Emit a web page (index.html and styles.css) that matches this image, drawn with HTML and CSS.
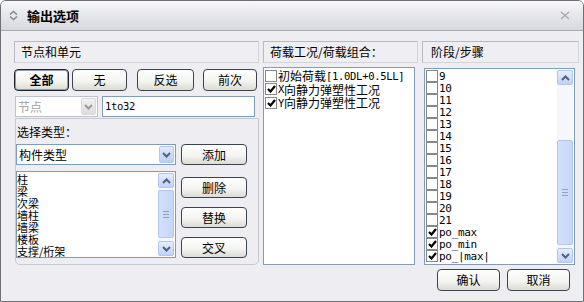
FILE: index.html
```html
<!DOCTYPE html>
<html>
<head>
    <meta charset="utf-8">
    <title>输出选项</title>
    <link rel="stylesheet" href="styles.css">
</head>
<body>
<div class="window">
    <div class="titlebar">
        <svg class="roll" width="9" height="11" viewBox="0 0 9 11"><path d="M1 4.5 L4.5 1.5 L8 4.5 M1 6.5 L4.5 9.5 L8 6.5" fill="none" stroke="#85878f" stroke-width="1.5"/></svg>
        <span class="title">输出选项</span>
        <svg class="close" width="10" height="9" viewBox="0 0 10 9"><path d="M1 1 L9 8 M9 1 L1 8" stroke="#a4a6ae" stroke-width="1.3"/></svg>
    </div>

    <div class="content">
        <div class="col left">
            <div class="head">节点和单元</div>
            <div class="btnrow">
                <div class="btn main b-all">全部</div>
                <div class="btn b-none">无</div>
                <div class="btn b-inv">反选</div>
                <div class="btn b-prev">前次</div>
            </div>
            <div class="pickrow">
                <div class="combo off node">
                    <span class="val">节点</span>
                    <span class="drop"><svg width="9" height="6" viewBox="0 0 9 6"><path d="M1 1 L4.5 4.5 L8 1" fill="none" stroke="#9a9a9a" stroke-width="2"/></svg></span>
                </div>
                <div class="field mono">1to32</div>
            </div>
            <div class="typebox">
                <div class="label">选择类型：</div>
                <div class="typegrid">
                    <div class="combo">
                        <span class="val">构件类型</span>
                        <span class="drop"><svg width="9" height="6" viewBox="0 0 9 6"><path d="M1 1 L4.5 4.5 L8 1" fill="none" stroke="#4d6185" stroke-width="2"/></svg></span>
                    </div>
                    <div class="btn slim">添加</div>
                    <div class="list types">
                        <div class="items">
                            <div>柱</div>
                            <div>梁</div>
                            <div>次梁</div>
                            <div>墙柱</div>
                            <div>墙梁</div>
                            <div>楼板</div>
                            <div>支撑/桁架</div>
                        </div>
                        <div class="sb">
                            <span class="arrow"><svg width="9" height="6" viewBox="0 0 9 6"><path d="M1 5 L4.5 1.5 L8 5" fill="none" stroke="#4d6185" stroke-width="2"/></svg></span>
                            <span class="thumb t-types"><i></i><i></i><i></i></span>
                            <span class="arrow"><svg width="9" height="6" viewBox="0 0 9 6"><path d="M1 1 L4.5 4.5 L8 1" fill="none" stroke="#4d6185" stroke-width="2"/></svg></span>
                        </div>
                    </div>
                    <div class="btncol">
                        <div class="btn slim">删除</div>
                        <div class="btn slim">替换</div>
                        <div class="btn slim">交叉</div>
                    </div>
                </div>
            </div>
        </div>

        <div class="col mid">
            <div class="head">荷载工况/荷载组合：</div>
            <div class="list cases">
                <div class="checks">
                    <div class="row"><span class="cb"></span>初始荷载<span class="mono">[1.0DL+0.5LL]</span></div>
                    <div class="row"><span class="cb on"><svg width="9" height="8" viewBox="0 0 9 8"><path d="M1 4 L3.5 6.5 L8 1" fill="none" stroke="#000" stroke-width="2.2"/></svg></span><span class="mono">X</span>向静力弹塑性工况</div>
                    <div class="row"><span class="cb on"><svg width="9" height="8" viewBox="0 0 9 8"><path d="M1 4 L3.5 6.5 L8 1" fill="none" stroke="#000" stroke-width="2.2"/></svg></span><span class="mono">Y</span>向静力弹塑性工况</div>
                </div>
            </div>
        </div>

        <div class="col right">
            <div class="head">阶段/步骤</div>
            <div class="list steps">
                <div class="checks tight">
                    <div class="row"><span class="cb"></span><span class="mono">9</span></div>
                    <div class="row"><span class="cb"></span><span class="mono">10</span></div>
                    <div class="row"><span class="cb"></span><span class="mono">11</span></div>
                    <div class="row"><span class="cb"></span><span class="mono">12</span></div>
                    <div class="row"><span class="cb"></span><span class="mono">13</span></div>
                    <div class="row"><span class="cb"></span><span class="mono">14</span></div>
                    <div class="row"><span class="cb"></span><span class="mono">15</span></div>
                    <div class="row"><span class="cb"></span><span class="mono">16</span></div>
                    <div class="row"><span class="cb"></span><span class="mono">17</span></div>
                    <div class="row"><span class="cb"></span><span class="mono">18</span></div>
                    <div class="row"><span class="cb"></span><span class="mono">19</span></div>
                    <div class="row"><span class="cb"></span><span class="mono">20</span></div>
                    <div class="row"><span class="cb"></span><span class="mono">21</span></div>
                    <div class="row"><span class="cb on"><svg width="9" height="8" viewBox="0 0 9 8"><path d="M1 4 L3.5 6.5 L8 1" fill="none" stroke="#000" stroke-width="2.2"/></svg></span><span class="mono">po_max</span></div>
                    <div class="row"><span class="cb on"><svg width="9" height="8" viewBox="0 0 9 8"><path d="M1 4 L3.5 6.5 L8 1" fill="none" stroke="#000" stroke-width="2.2"/></svg></span><span class="mono">po_min</span></div>
                    <div class="row"><span class="cb on"><svg width="9" height="8" viewBox="0 0 9 8"><path d="M1 4 L3.5 6.5 L8 1" fill="none" stroke="#000" stroke-width="2.2"/></svg></span><span class="mono">po_|max|</span></div>
                </div>
                <div class="sb">
                    <span class="arrow"><svg width="9" height="6" viewBox="0 0 9 6"><path d="M1 5 L4.5 1.5 L8 5" fill="none" stroke="#4d6185" stroke-width="2"/></svg></span>
                    <span class="thumb t-steps"><i></i><i></i><i></i></span>
                    <span class="arrow"><svg width="9" height="6" viewBox="0 0 9 6"><path d="M1 1 L4.5 4.5 L8 1" fill="none" stroke="#4d6185" stroke-width="2"/></svg></span>
                </div>
            </div>
            <div class="actions">
                <div class="btn act">确认</div>
                <div class="btn act">取消</div>
            </div>
        </div>
    </div>
</div>
</body>
</html>
```

FILE: styles.css
```css
body {
    margin: 0;
    font-family: "Noto Sans CJK SC", sans-serif;
    font-size: 12px;
    color: #000;
}

.mono {
    font-family: "DejaVu Sans Mono", "Liberation Mono", monospace;
    font-size: 10.5px;
    letter-spacing: -0.3px;
}

.window {
    width: 584px;
    height: 302px;
    box-sizing: border-box;
    border: 1px solid #6f7075;
    border-radius: 6px 6px 0 0;
    background: #eeeef2;
    overflow: hidden;
}

.titlebar {
    height: 29px;
    border-bottom: 1px solid #a9abb3;
    background: linear-gradient(#f8f8fa, #e9eaee 40%, #d5d8de);
    display: flex;
    align-items: center;
    padding-left: 8px;
}

.roll { margin-right: 9px; }

.title {
    font-weight: bold;
    font-size: 13px;
    flex: 1;
}

.close { margin-right: 13px; }

.content {
    display: flex;
    padding: 10px 0 0 13px;
}

.col { display: flex; flex-direction: column; }
.left { width: 245px; }
.mid { width: 155px; margin-left: 4px; }
.right { width: 157px; margin-left: 4px; }

.head {
    height: 22px;
    box-sizing: border-box;
    border: 1px solid #b8b9c2;
    border-right-color: #d4d5dc;
    border-bottom-color: #d4d5dc;
    background: #efeff3;
    padding-left: 6px;
    line-height: 20px;
}

.right .head { padding-left: 8px; }

.btn {
    box-sizing: border-box;
    height: 22px;
    border: 1px solid #3c4350;
    border-radius: 4px;
    background: linear-gradient(#ffffff, #f4f4f1 55%, #dcdcd5);
    display: flex;
    align-items: center;
    justify-content: center;
    line-height: 1;
}

.btn.main {
    font-weight: bold;
    border-color: #20242c;
    box-shadow: inset 0 0 0 1px #8c9ab4;
}

.btnrow { display: flex; margin-top: 6px; }
.b-all { width: 55px; }
.b-none { width: 55px; margin-left: 3px; }
.b-inv { width: 57px; margin-left: 10px; }
.b-prev { width: 54px; margin-left: 9px; }

.pickrow {
    display: flex;
    margin-top: 5px;
    height: 21px;
}

.combo {
    box-sizing: border-box;
    height: 21px;
    border: 1px solid #7f9db9;
    background: #fff;
    display: flex;
    align-items: center;
}

.combo .val {
    flex: 1;
    padding-left: 2px;
}

.drop {
    width: 15px;
    height: 17px;
    margin-right: 1px;
    border-radius: 2px;
    background: linear-gradient(#e2ebfd, #b9cdf6);
    border: 1px solid #b3c6ee;
    box-sizing: border-box;
    display: flex;
    align-items: center;
    justify-content: center;
}

.combo.off { border-color: #b9c3d4; }
.combo.off .val { color: #a3a3a3; }
.combo.off .drop {
    background: linear-gradient(#f2f2f2, #dcdcdc);
    border-color: #d8d8d8;
}

.node { width: 83px; margin-left: 1px; }

.field {
    box-sizing: border-box;
    width: 153px;
    margin-left: 4px;
    height: 21px;
    border: 1px solid #7f9db9;
    background: #fff;
    padding-left: 2px;
    line-height: 19px;
}

.typebox {
    margin: 1px 0 0 1px;
    height: 147px;
    box-sizing: border-box;
    border: 1px solid #c7c8d0;
    border-radius: 0 0 5px 5px;
    padding-top: 6px;
}

.label { line-height: 13px; padding-left: 1px; }

.typegrid {
    display: grid;
    grid-template-columns: 160px 66px;
    column-gap: 5px;
    row-gap: 6px;
    margin-top: 6px;
}

.btn.slim { height: 21px; }

.btncol {
    display: flex;
    flex-direction: column;
    gap: 9px;
    padding-top: 6px;
}

.list {
    box-sizing: border-box;
    border: 1px solid #7f9db9;
    background: #fff;
    display: flex;
}

.types { height: 87px; }
.cases { height: 198px; width: 152px; margin-top: 4px; }
.steps { height: 197px; width: 151px; margin: 5px 0 0 2px; }

.items {
    flex: 1;
    font-size: 11px;
    line-height: 12px;
    padding-top: 1px;
}

.checks {
    flex: 1;
    padding-top: 1px;
}

.row {
    display: flex;
    align-items: center;
    height: 13.5px;
    white-space: nowrap;
}

.tight .row { height: 12px; }
.tight { padding-top: 1px; }
.tight .mono { font-size: 11px; }

.cb {
    width: 12px;
    height: 12px;
    box-sizing: border-box;
    border: 1px solid #85878c;
    background: #fff;
    margin: 0 1px 0 1px;
    display: flex;
    align-items: center;
    justify-content: center;
    flex: none;
}

.sb {
    width: 16px;
    margin: 1px 1px 1px 0;
    background: #f6f7fb;
    display: flex;
    flex-direction: column;
}

.arrow {
    height: 15px;
    box-sizing: border-box;
    border: 1px solid #b3c6ee;
    border-radius: 2px;
    background: linear-gradient(#e6eefd, #c0d2f6);
    display: flex;
    align-items: center;
    justify-content: center;
}

.thumb {
    flex: 1;
    box-sizing: border-box;
    border: 1px solid #b3c6ee;
    border-radius: 2px;
    background: linear-gradient(90deg, #d4e0fb, #c5d6f8);
    display: flex;
    flex-direction: column;
    align-items: center;
    justify-content: center;
    gap: 2px;
}

.thumb i {
    width: 6px;
    height: 1px;
    background: #8ea2c8;
}

.t-types { margin: 2px 0 3px; }
.t-steps { margin: 55px 0 3px; }

.actions {
    display: flex;
    justify-content: flex-end;
    gap: 7px;
    margin: 4px 9px 0 0;
}

.btn.act { width: 63px; }
```
